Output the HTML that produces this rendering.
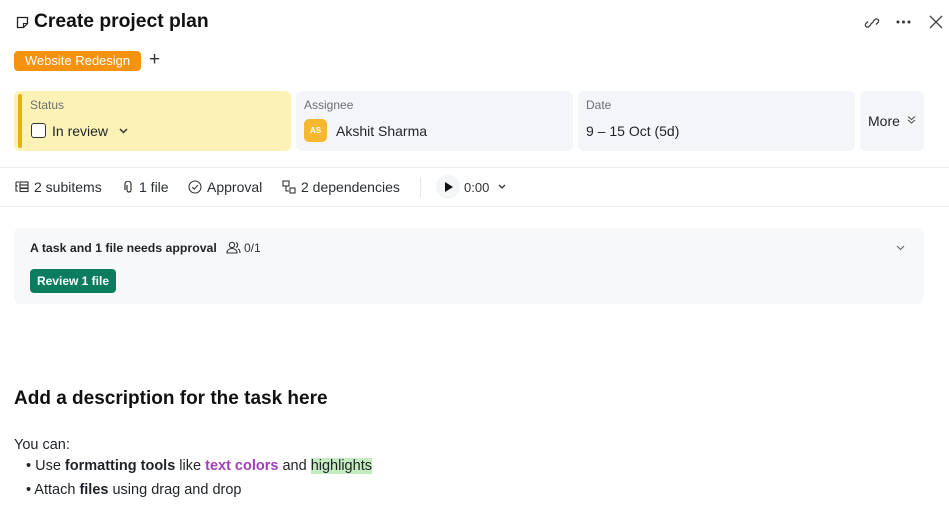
<!DOCTYPE html>
<html><head><style>
*{margin:0;padding:0;box-sizing:border-box}
body{width:949px;height:517px;background:#fff;font-family:"Liberation Sans",sans-serif;color:#1f2328;position:relative;overflow:hidden}
.a{position:absolute}
.card{position:absolute;top:91px;height:60px;border-radius:6px;background:#f4f5f8}
.lbl{position:absolute;left:8px;top:7px;font-size:12px;color:#6b6f76}
.val{position:absolute;left:8px;top:32px;font-size:14px;color:#1f2328}
.tb{position:absolute;top:179px;font-size:14px;color:#2a2d33;display:flex;align-items:center;gap:5px}
</style></head><body>
<svg class="a" style="left:16px;top:16px" width="13" height="13" viewBox="0 0 13 13"><path d="M1.5 1.5h10v6l-4 4h-6z" fill="none" stroke="#222" stroke-width="1.3"/><path d="M7.5 11.5v-4h4" fill="none" stroke="#222" stroke-width="1.1"/></svg>
<div class="a" style="left:34px;top:11px;font-size:19.3px;font-weight:bold;color:#111">Create project plan</div>
<svg class="a" style="left:864px;top:15px" width="16" height="16" viewBox="0 0 16 16" fill="none" stroke="#444" stroke-width="1.3"><path d="M7 9.5l-2 2a2 2 0 0 1-3-3l2-2M9 6.5l2-2a2 2 0 0 1 3 3l-2 2M6.5 9.5l3-3"/></svg>
<svg class="a" style="left:896px;top:20px" width="15" height="4" viewBox="0 0 15 4" fill="#333"><circle cx="2" cy="2" r="1.5"/><circle cx="7.5" cy="2" r="1.5"/><circle cx="13" cy="2" r="1.5"/></svg>
<svg class="a" style="left:929px;top:15px" width="14" height="14" viewBox="0 0 14 14" stroke="#444" stroke-width="1.3"><path d="M1 1l12 12M13 1L1 13"/></svg>
<div class="a" style="left:14px;top:51px;width:127px;height:20px;background:#f5930f;border-radius:4px;color:#fff;font-size:13px;line-height:20px;text-align:center">Website Redesign</div>
<div class="a" style="left:149px;top:49px;font-size:19px;color:#333;font-weight:300">+</div>

<div class="card" style="left:14px;width:277px;background:#fdf2b6"><div class="a" style="left:4px;top:3px;width:4px;height:54px;background:#e8b00e;border-radius:2px"></div>
<div class="lbl" style="left:16px">Status</div>
<div class="a" style="left:17px;top:32px;width:15px;height:15px;border:1.5px solid #333;border-radius:3px;background:#fff"></div>
<div class="val" style="left:38px">In review</div>
<svg class="a" style="left:105px;top:37px" width="9" height="6" viewBox="0 0 9 6"><path d="M1 1l3.5 3.5L8 1" fill="none" stroke="#333" stroke-width="1.5"/></svg></div>

<div class="card" style="left:296px;width:277px"><div class="lbl">Assignee</div>
<div class="a" style="left:8px;top:28px;width:23px;height:23px;background:#f5b82e;border-radius:5px;color:#fff;font-size:8px;font-weight:bold;line-height:23px;text-align:center">AS</div>
<div class="val" style="left:40px">Akshit Sharma</div></div>

<div class="card" style="left:578px;width:277px"><div class="lbl">Date</div><div class="val">9 – 15 Oct (5d)</div></div>
<div class="card" style="left:860px;width:64px"><div class="a" style="left:8px;top:22px;font-size:14px">More</div>
<svg class="a" style="left:47px;top:24px" width="9" height="9" viewBox="0 0 9 9" fill="none" stroke="#555" stroke-width="1.1"><path d="M1 1.5l3.5 3 3.5-3M1 5l3.5 3 3.5-3"/></svg></div>

<div class="a" style="left:0;top:167px;width:949px;height:1px;background:#eceef1"></div>
<div class="a" style="left:0;top:206px;width:949px;height:1px;background:#eceef1"></div>

<div class="tb" style="left:15px"><svg width="14" height="12" viewBox="0 0 14 12" fill="none" stroke="#333" stroke-width="1.1"><path d="M1 1h3M1 1v9h2M3 5H1"/><rect x="5" y="1" width="8" height="3"/><rect x="5" y="4" width="8" height="3"/><rect x="5" y="7.5" width="8" height="3"/></svg>2 subitems</div>
<div class="tb" style="left:124px"><svg width="10" height="13" viewBox="0 0 10 13" fill="none" stroke="#333" stroke-width="1.2"><path d="M3 4v5a2 2 0 0 0 4 0V3a3 3 0 0 0-6 0v6"/></svg>1 file</div>
<div class="tb" style="left:188px"><svg width="14" height="14" viewBox="0 0 14 14" fill="none" stroke="#333" stroke-width="1.1"><circle cx="7" cy="7" r="6"/><path d="M4.3 7.2l2 2 3.5-4"/></svg>Approval</div>
<div class="tb" style="left:282px"><svg width="14" height="14" viewBox="0 0 14 14" fill="none" stroke="#333" stroke-width="1.1"><rect x="1" y="1" width="6" height="5"/><rect x="8" y="8" width="5" height="5"/><path d="M4 6v5h3"/></svg>2 dependencies</div>
<div class="a" style="left:420px;top:177px;width:1px;height:20px;background:#e4e6ea"></div>
<div class="a" style="left:436px;top:175px;width:24px;height:24px;border-radius:12px;background:#f4f5f7"></div>
<svg class="a" style="left:445px;top:182px" width="8" height="10"><path d="M0 0l8 5-8 5z" fill="#111"/></svg>
<div class="a" style="left:464px;top:180px;font-size:13px;color:#333">0:00</div>
<svg class="a" style="left:498px;top:184px" width="8" height="6" viewBox="0 0 8 6"><path d="M1 1l3 3 3-3" fill="none" stroke="#333" stroke-width="1.3"/></svg>

<div class="a" style="left:14px;top:228px;width:910px;height:76px;background:#f7f8fa;border-radius:6px"></div>
<div class="a" style="left:30px;top:241px;font-size:12.3px;font-weight:bold;color:#1f2328">A task and 1 file needs approval</div>
<svg class="a" style="left:226px;top:241px" width="15" height="13" viewBox="0 0 15 13" fill="none" stroke="#333" stroke-width="1.1"><circle cx="6" cy="4" r="2.7"/><path d="M1 12c0-3 2.2-4.5 5-4.5s5 1.5 5 4.5zM10 1.5a2.7 2.7 0 0 1 0 5M12 8c1.3.6 2 2 2 4"/></svg>
<div class="a" style="left:244px;top:241px;font-size:12px;color:#333">0/1</div>
<svg class="a" style="left:896px;top:245px" width="9" height="6" viewBox="0 0 9 6"><path d="M1 1l3.5 3.5L8 1" fill="none" stroke="#666" stroke-width="1.1"/></svg>
<div class="a" style="left:30px;top:269px;width:86px;height:24px;background:#0b7d5e;border-radius:4px;color:#fff;font-size:12px;font-weight:bold;line-height:24px;text-align:center">Review 1 file</div>

<div class="a" style="left:14px;top:388px;font-size:19px;font-weight:bold;color:#111">Add a description for the task here</div>
<div class="a" style="left:14px;top:437px;font-size:14.5px;color:#1f2328">You can:</div>
<div class="a" style="left:26px;top:458px;font-size:14.5px;color:#1f2328">• Use <b>formatting tools</b> like <b style="color:#a040b8">text colors</b> and <span style="background:#c5ebc0">highlights</span></div>
<div class="a" style="left:26px;top:482px;font-size:14.5px;color:#1f2328">• Attach <b>files</b> using drag and drop</div>
</body></html>
